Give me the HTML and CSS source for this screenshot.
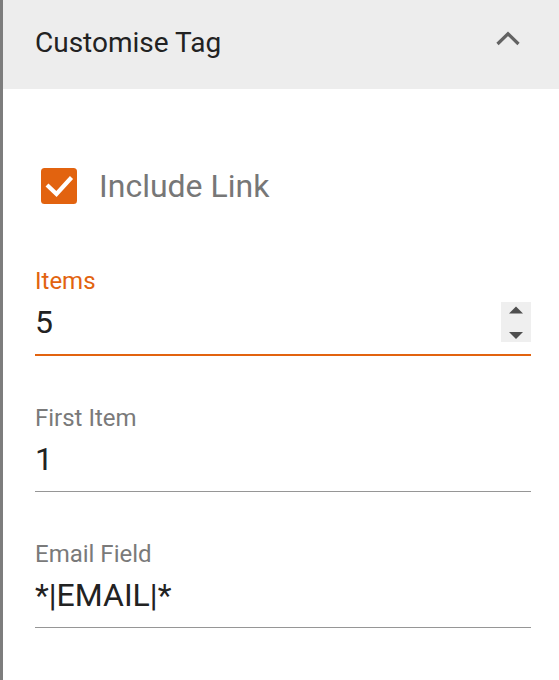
FILE: index.html
```html
<!DOCTYPE html>
<html lang="en">
<head>
<meta charset="utf-8">
<title>Customise Tag</title>
<link rel="stylesheet" href="styles.css">
</head>
<body>
<div class="panel">
  <div class="panel-header">
    <span class="panel-title">Customise Tag</span>
    <svg class="chevron" width="26" height="16" viewBox="0 0 26 16" aria-hidden="true">
      <polyline points="2.5,13 13,2.8 23.5,13" fill="none" stroke="#636363" stroke-width="3.2"/>
    </svg>
  </div>
  <div class="panel-body">
    <label class="check-row">
      <svg class="checkbox" width="36" height="36" viewBox="0 0 36 36" aria-hidden="true">
        <rect x="0" y="0" width="36" height="36" rx="3.5" fill="#e2630f"/>
        <polyline points="6,17 15.5,26 30.5,9.5" fill="none" stroke="#fff" stroke-width="4.2"/>
      </svg>
      <span class="check-label">Include Link</span>
    </label>

    <div class="field focused">
      <div class="field-label">Items</div>
      <div class="field-input">
        <span class="value">5</span>
        <span class="spinner">
          <svg width="14" height="33" viewBox="0 0 14 33" aria-hidden="true">
            <polygon points="0,7.5 7,0.5 14,7.5" fill="#4f4f4f"/>
            <polygon points="0,26 14,26 7,33" fill="#4f4f4f"/>
          </svg>
        </span>
      </div>
    </div>

    <div class="field">
      <div class="field-label">First Item</div>
      <div class="field-input"><span class="value">1</span></div>
    </div>

    <div class="field">
      <div class="field-label">Email Field</div>
      <div class="field-input"><span class="value">*|EMAIL|*</span></div>
    </div>
  </div>
</div>
</body>
</html>
```
FILE: styles.css
```css
html, body {
  margin: 0;
  padding: 0;
  background: #ffffff;
}

body {
  font-family: Roboto, "Noto Sans", "Liberation Sans", sans-serif;
  color: #212121;
}

.panel {
  border-left: 3px solid #7d7d7d;
  min-height: 680px;
  box-sizing: border-box;
}

.panel-header {
  height: 89px;
  background: #ededed;
  display: flex;
  align-items: center;
  justify-content: space-between;
  padding: 0 38px 0 32px;
}

.panel-title {
  font-size: 28px;
  line-height: 32px;
  color: #222222;
  margin-top: -3px;
}

.chevron {
  display: block;
  margin-top: -11px;
}

.panel-body {
  padding: 79px 28px 0 32px;
}

.check-row {
  display: flex;
  align-items: center;
  gap: 22px;
  padding-left: 6px;
  height: 36px;
  margin-bottom: 63px;
}

.checkbox {
  display: block;
  flex: none;
}

.check-label {
  font-size: 32px;
  line-height: 36px;
  color: #777777;
}

.field {
  margin-bottom: 48px;
  border-bottom: 1px solid #969696;
}

.field.focused {
  border-bottom: 2px solid #e2630f;
}

.field-label {
  font-size: 24px;
  line-height: 28px;
  color: #7a7a7a;
  margin-bottom: 7px;
}

.field.focused .field-label {
  color: #e2630f;
}

.field-input {
  display: flex;
  align-items: center;
  justify-content: space-between;
  height: 40px;
  margin-bottom: 12px;
}

.value {
  font-size: 32px;
  line-height: 40px;
  color: #222222;
}

.spinner {
  width: 30px;
  height: 40px;
  background: #efefef;
  display: flex;
  align-items: center;
  justify-content: center;
}

.spinner svg {
  display: block;
}
```
